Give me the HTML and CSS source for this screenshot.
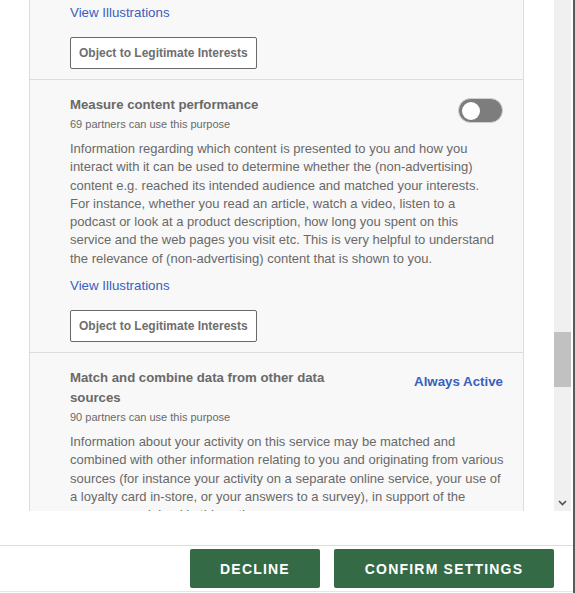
FILE: index.html
```html
<!DOCTYPE html>
<html lang="en">
<head>
  <meta charset="UTF-8" />
  <title>Privacy Preference Center</title>
  <link rel="stylesheet" href="styles.css">
</head>
<body>

<div class="modal">
  <!-- SCROLLING LIST OF PURPOSES -->
  <div class="scroll-area">
    <div class="content">
      <div class="purpose-list">

        <div class="purpose first">
          <a href="#" class="illustrations">View Illustrations</a>
          <button class="object-btn">Object to Legitimate Interests</button>
        </div>

        <div class="purpose">
          <div class="purpose-head">
            <h4 class="purpose-title">Measure content performance</h4>
            <span class="toggle"><span class="knob"></span></span>
          </div>
          <p class="partners">69 partners can use this purpose</p>
          <p class="desc">Information regarding which content is presented to you and how you interact with it can be used to determine whether the (non-advertising) content e.g. reached its intended audience and matched your interests. For&nbsp;instance, whether you read an article, watch a video, listen to a podcast or look at a product description, how long you spent on this service and the web pages you visit etc. This is very helpful to understand the relevance of (non-advertising) content that is shown to you.</p>
          <a href="#" class="illustrations">View Illustrations</a>
          <button class="object-btn">Object to Legitimate Interests</button>
        </div>

        <div class="purpose">
          <div class="purpose-head">
            <h4 class="purpose-title">Match and combine data from other data sources</h4>
            <span class="always-active">Always Active</span>
          </div>
          <p class="partners">90 partners can use this purpose</p>
          <p class="desc desc-wide">Information about your activity on this service may be matched and combined with other information relating to you and originating from various sources (for instance your activity on a separate online service, your use of a loyalty card in-store, or your answers to a survey), in support of the purposes explained in this notice.</p>
        </div>

      </div>
    </div>
    <div class="scrollbar">
      <div class="thumb"></div>
      <div class="arrow-down">
        <svg width="9" height="6" viewBox="0 0 9 6"><path d="M1 1 L4.5 4.5 L8 1" fill="none" stroke="#505050" stroke-width="1.6"/></svg>
      </div>
    </div>
  </div>

  <!-- FOOTER BUTTONS -->
  <div class="footer">
    <button class="action-btn decline">Decline</button>
    <button class="action-btn confirm">Confirm Settings</button>
  </div>
</div>

</body>
</html>
```

FILE: styles.css
```css
body {
  margin: 0;
  font-family: 'Liberation Sans', Arial, sans-serif;
  background: #5a5a5a;
  color: #696969;
}

.modal {
  width: 573px;
  height: 593px;
  background: #fff;
  display: flex;
  flex-direction: column;
}

.scroll-area {
  display: flex;
  height: 511px;
}

.content {
  width: 554px;
  overflow: hidden;
  padding: 0 30px 0 29px;
  box-sizing: border-box;
}

.purpose-list {
  background: #f8f8f8;
  border-left: 1px solid #dcdcdc;
  border-right: 1px solid #dcdcdc;
}

.purpose {
  padding: 15px 20px 10px 40px;
  border-top: 1px solid #dcdcdc;
}

.purpose.first {
  border-top: 0;
  padding-top: 4px;
}

.purpose-head {
  display: flex;
  justify-content: space-between;
  align-items: flex-start;
}

.purpose-title {
  margin: 0;
  max-width: 280px;
  font-size: 13.2px;
  line-height: 20px;
  font-weight: bold;
  color: #696969;
}

.toggle {
  display: flex;
  align-items: center;
  width: 45px;
  height: 25px;
  margin: 3px 0 -8px;
  box-sizing: border-box;
  background: #7d7d7d;
  border: 1px solid #d0d0d0;
  border-radius: 13px;
  padding-left: 3px;
}

.knob {
  width: 18px;
  height: 18px;
  border-radius: 50%;
  background: #fff;
}

.always-active {
  margin-top: 4px;
  font-size: 13.3px;
  line-height: 20px;
  font-weight: bold;
  color: #3860be;
}

.partners {
  margin: 0;
  font-size: 11px;
  line-height: 18px;
}

.desc {
  margin: 7px 2px 0 0;
  font-size: 13px;
  line-height: 18.3px;
}

.desc-wide {
  margin-right: -3px;
}

.illustrations {
  display: block;
  margin-top: 9px;
  font-size: 13.3px;
  line-height: 18px;
  color: #3860be;
  text-decoration: none;
}

.purpose.first .illustrations {
  margin-top: 0;
}

.object-btn {
  display: block;
  margin-top: 15px;
  height: 32px;
  padding: 0 8px;
  background: #fff;
  border: 1px solid #696969;
  border-radius: 2px;
  font-family: inherit;
  font-size: 12px;
  font-weight: bold;
  color: #6e6e6e;
}

.scrollbar {
  width: 17px;
  background: #f0f0f0;
  display: flex;
  flex-direction: column;
  align-items: center;
}

.thumb {
  width: 17px;
  height: 55px;
  margin-top: 332px;
  background: #c1c1c1;
}

.arrow-down {
  margin-top: auto;
  height: 17px;
  display: flex;
  align-items: center;
  justify-content: center;
}

.footer {
  margin-top: 34px;
  border-top: 1px solid #dcdcdc;
  border-bottom: 1px solid #e6e6e6;
  padding: 3px 19px 3px 0;
  display: flex;
  justify-content: flex-end;
  gap: 14px;
}

.action-btn {
  height: 39px;
  border: 0;
  border-radius: 2px;
  background: #346b46;
  color: #fff;
  font-family: inherit;
  font-size: 14px;
  font-weight: bold;
  letter-spacing: 1.2px;
  text-transform: uppercase;
}

.decline {
  width: 130px;
}

.confirm {
  width: 220px;
}
```
